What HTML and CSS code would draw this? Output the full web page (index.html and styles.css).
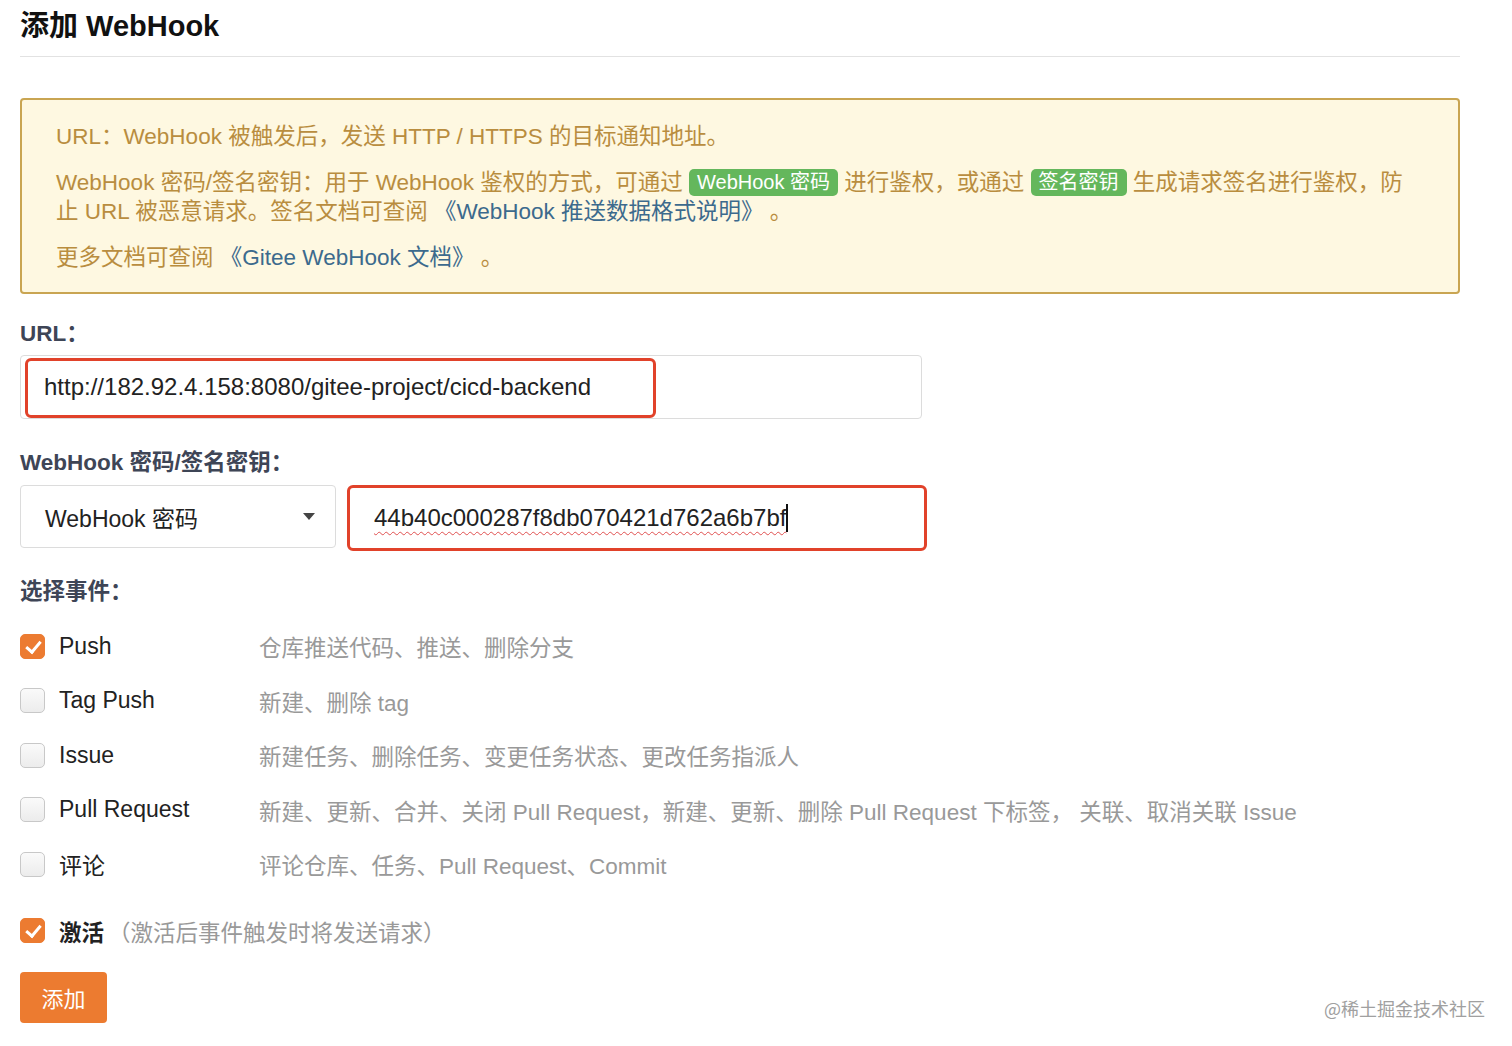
FILE: index.html
```html
<!DOCTYPE html>
<html lang="zh">
<head>
<meta charset="utf-8">
<link rel="stylesheet" href="styles.css">
</head>
<body>
<div class="page">
  <h1 class="title">添加 WebHook</h1>
  <div class="notice">
    <p>URL：WebHook 被触发后，发送 HTTP / HTTPS 的目标通知地址。</p>
    <p>WebHook 密码/签名密钥：用于 WebHook 鉴权的方式，可通过 <span class="badge">WebHook 密码</span> 进行鉴权，或通过 <span class="badge">签名密钥</span> 生成请求签名进行鉴权，防止 URL 被恶意请求。签名文档可查阅 <a class="link">《WebHook 推送数据格式说明》</a> 。</p>
    <p>更多文档可查阅 <a class="link">《Gitee WebHook 文档》</a> 。</p>
  </div>

  <div class="field field-url">
    <label class="label">URL：</label>
    <div class="url-input">
      <span class="url-text">http://182.92.4.158:8080/gitee-project/cicd-backend</span>
      <span class="highlight"></span>
    </div>
  </div>

  <div class="field field-secret">
    <label class="label">WebHook 密码/签名密钥：</label>
    <div class="secret-row">
      <div class="select"><span>WebHook 密码</span><span class="arrow"></span></div>
      <div class="secret-input"><span class="secret-text">44b40c000287f8db070421d762a6b7bf</span><span class="caret"></span></div>
    </div>
  </div>

  <div class="field events">
    <label class="label">选择事件：</label>
    <div class="event"><span class="cb checked"></span><span class="ev-name">Push</span><span class="ev-desc">仓库推送代码、推送、删除分支</span></div>
    <div class="event"><span class="cb"></span><span class="ev-name">Tag Push</span><span class="ev-desc">新建、删除 tag</span></div>
    <div class="event"><span class="cb"></span><span class="ev-name">Issue</span><span class="ev-desc">新建任务、删除任务、变更任务状态、更改任务指派人</span></div>
    <div class="event"><span class="cb"></span><span class="ev-name">Pull Request</span><span class="ev-desc">新建、更新、合并、关闭 Pull Request，新建、更新、删除 Pull Request 下标签， 关联、取消关联 Issue</span></div>
    <div class="event"><span class="cb"></span><span class="ev-name">评论</span><span class="ev-desc">评论仓库、任务、Pull Request、Commit</span></div>
  </div>

  <div class="activate"><span class="cb checked"></span><span class="act-name">激活</span><span class="act-desc">（激活后事件触发时将发送请求）</span></div>

  <button class="btn">添加</button>
</div>
<div class="watermark">@稀土掘金技术社区</div>
</body>
</html>
```

FILE: styles.css
```css
* { box-sizing: border-box; }
html, body { margin: 0; padding: 0; background: #fff; }
body {
  font-family: "Liberation Sans", "Noto Sans CJK SC", sans-serif;
  color: #333;
  width: 1512px;
  height: 1046px;
  overflow: hidden;
  position: relative;
}
.page { padding: 0 52px 0 20px; }
.title {
  margin: 0;
  padding-top: 7px;
  height: 57px;
  font-size: 29px;
  font-weight: bold;
  color: #111;
  line-height: 38px;
  border-bottom: 1px solid #e2e2e2;
}
.notice {
  margin-top: 41px;
  background: #fef8e1;
  border: 2px solid #c9a552;
  border-radius: 4px;
  padding: 22px 46px 20px 34px;
  color: #b98d3f;
  font-size: 22.5px;
  line-height: 29px;
}
.notice p { margin: 0 0 17px; }
.notice p:last-child { margin-bottom: 0; }
.badge {
  display: inline-block;
  background: #64b75c;
  color: #fff;
  font-size: 20px;
  line-height: 27px;
  padding: 0 8px;
  border-radius: 5px;
  vertical-align: 1px;
}
.link { color: #3c6a8d; }
.label {
  display: block;
  font-size: 22.5px;
  font-weight: bold;
  color: #3e4556;
  line-height: 30px;
}
.field-url .label { margin-top: 25px; }
.url-input {
  position: relative;
  margin-top: 6px;
  width: 902px;
  height: 64px;
  border: 1px solid #dcdcdc;
  border-radius: 4px;
  display: flex;
  align-items: center;
  padding-left: 23px;
}
.url-text { font-size: 24px; color: #222; }
.highlight {
  position: absolute;
  left: 4px;
  top: 2px;
  width: 631px;
  height: 60px;
  border: 3px solid #e1422a;
  border-radius: 6px;
}
.field-secret .label { margin-top: 29px; }
.secret-row { display: flex; gap: 11px; margin-top: 7px; align-items: flex-start; }
.select {
  width: 316px;
  height: 63px;
  border: 1px solid #dcdcdc;
  border-radius: 4px;
  display: flex;
  align-items: center;
  justify-content: space-between;
  padding: 0 20px 0 24px;
  font-size: 23px;
  color: #222;
}
.arrow {
  width: 0; height: 0;
  border-left: 6px solid transparent;
  border-right: 6px solid transparent;
  border-top: 7px solid #444;
}
.secret-input {
  width: 580px;
  height: 66px;
  border: 3px solid #e1422a;
  border-radius: 6px;
  display: flex;
  align-items: center;
  padding-left: 24px;
}
.secret-text {
  font-size: 24px;
  color: #222;
  text-decoration: underline wavy #e05050;
  text-decoration-thickness: 1px;
  text-underline-offset: 5px;
}
.caret { width: 2px; height: 28px; background: #111; }
.events .label { margin-top: 26px; margin-bottom: 12px; }
.event {
  display: flex;
  align-items: center;
  height: 54.5px;
}
.cb {
  width: 25px;
  height: 25px;
  border-radius: 5px;
  border: 1px solid #c8c8c8;
  background: linear-gradient(#fafafa, #ececec);
  flex: none;
  position: relative;
}
.cb.checked {
  background: #ec7b31;
  border-color: #ec7b31;
}
.cb.checked::after {
  content: "";
  position: absolute;
  left: 8px;
  top: 3px;
  width: 6px;
  height: 12px;
  border-right: 3.5px solid #fff;
  border-bottom: 3.5px solid #fff;
  transform: rotate(40deg);
}
.ev-name {
  width: 200px;
  margin-left: 14px;
  font-size: 23px;
  color: #222;
}
.ev-desc { font-size: 22.5px; color: #999; }
.activate {
  display: flex;
  align-items: center;
  margin-top: 17px;
  height: 44px;
}
.act-name { margin-left: 14px; font-size: 22.5px; font-weight: bold; color: #222; }
.act-desc { margin-left: 4px; font-size: 22.5px; color: #999; }
.btn {
  display: block;
  margin-top: 19px;
  width: 87px;
  height: 51px;
  border: none;
  border-radius: 4px;
  background: #ec7b30;
  color: #fff;
  font-family: "Noto Sans CJK SC", sans-serif;
  font-size: 22px;
  padding: 0;
}
.watermark {
  position: absolute;
  right: 27px;
  top: 995px;
  font-size: 18px;
  color: #a0a0a0;
  font-family: "Noto Sans CJK SC", sans-serif;
}
```
